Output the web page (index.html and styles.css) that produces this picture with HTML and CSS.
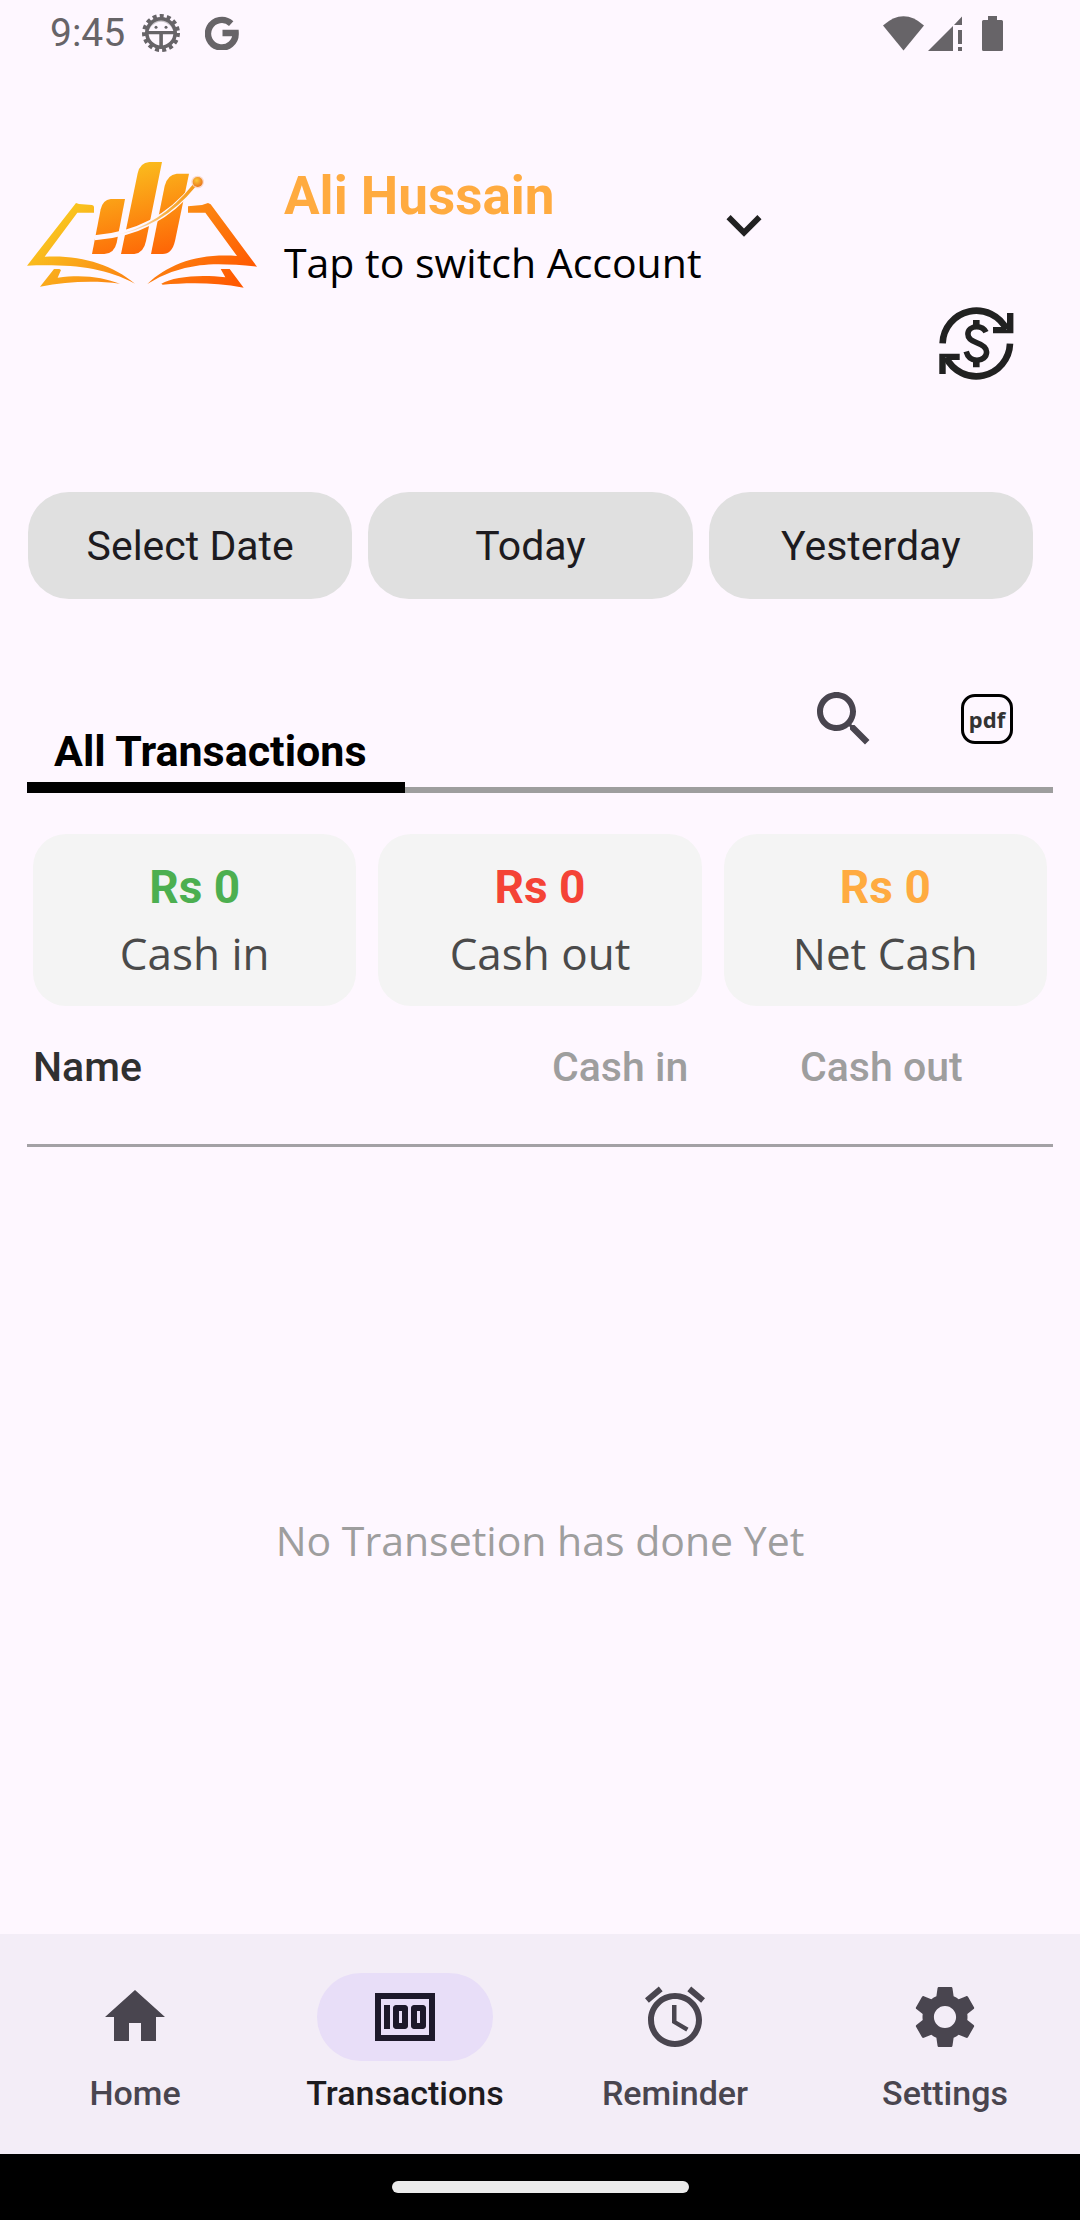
FILE: index.html
```html
<!DOCTYPE html>
<html lang="en">
<head>
<meta charset="utf-8">
<meta name="viewport" content="width=device-width, initial-scale=1">
<title>Transactions</title>
<link rel="stylesheet" href="styles.css">
</head>
<body>
<div class="status-bar">
  <div class="status-left">
    <span>9:45</span>
    <svg class="status-debug" viewBox="0 0 38 38" aria-hidden="true">
      <circle cx="19" cy="19" r="17" fill="none" stroke="currentColor" stroke-width="4" stroke-dasharray="4 3.12"/>
      <circle cx="19" cy="19" r="14.2" fill="none" stroke="currentColor" stroke-width="3.6"/>
      <path d="M5 17h28v3.200H5zM17.300 19h3.600v14h-3.600z" fill="currentColor"/>
      <path d="M6 17.500A13 13 0 0 1 32 17.500L28.500 12Q19 3.500 9.500 12z" fill="currentColor" opacity=".35"/>
      <circle cx="14" cy="13.200" r="1.500" fill="currentColor"/>
      <circle cx="24" cy="13.200" r="1.500" fill="currentColor"/>
    </svg>
    <svg class="status-g" viewBox="0 0 34 34" aria-hidden="true">
      <path d="M26.200 7.600A13.800 13.800 0 1 0 30.600 17H17.500" fill="none" stroke="currentColor" stroke-width="6.400"/>
    </svg>
  </div>
  <div class="status-right">
    <svg class="status-wifi" viewBox="0 0 41 35" aria-hidden="true"><path d="M0 9.500Q20.500-9 41 9.500L20.500 34.500z" fill="currentColor"/></svg>
    <svg class="status-signal" viewBox="0 0 34 35" aria-hidden="true"><path d="M0 35L25 10V35zM26 9L34 0.500V9zM30 14h4v14h-4zM30 31h4v4h-4z" fill="currentColor"/></svg>
    <svg class="status-battery" viewBox="0 0 21 35" aria-hidden="true"><path d="M6 0h9v4h4.500q1.500 0 1.500 1.500v28q0 1.500-1.500 1.500h-18Q0 35 0 33.500v-28Q0 4 1.500 4H6z" fill="currentColor"/></svg>
  </div>
</div>

<header class="header">
  <button class="account" type="button">
    <svg class="logo" viewBox="81 66 690 378" aria-hidden="true">
      <defs>
        <linearGradient id="flame" gradientUnits="userSpaceOnUse" x1="210" y1="180" x2="560" y2="560">
          <stop offset="0" stop-color="#f9c920"/>
          <stop offset=".5" stop-color="#fb8c14"/>
          <stop offset="1" stop-color="#ff5a02"/>
        </linearGradient>
        <linearGradient id="bars" gradientUnits="userSpaceOnUse" x1="390" y1="60" x2="460" y2="345">
          <stop offset="0" stop-color="#fac01f"/>
          <stop offset="1" stop-color="#fe6606"/>
        </linearGradient>
        <linearGradient id="trail" gradientUnits="userSpaceOnUse" x1="340" y1="285" x2="580" y2="140">
          <stop offset="0" stop-color="#fef7ff"/>
          <stop offset=".6" stop-color="#f8b040"/>
          <stop offset="1" stop-color="#f59a1a"/>
        </linearGradient>
        <radialGradient id="ball" cx=".4" cy=".35" r=".7">
          <stop offset="0" stop-color="#fcc838"/>
          <stop offset="1" stop-color="#e8701a"/>
        </radialGradient>
      </defs>
      <g fill="url(#flame)">
        <path d="M228 189L237 192L276 195Q282 196 282 201V218H232L134 350C240 344 335 372 405 431C310 381 215 373 81 377z"/>
        <path d="M564 199L606 195L624 189L632 193L771 380C700 372 640 370 600 376Q510 388 442 432C505 373 590 340 711 348L616 218H564z"/>
        <path d="M162 387H178L183 390L173 413C250 402 310 412 360 431C280 421 200 425 120 440z"/>
        <path d="M662 387H689L731 443C640 426 560 429 488 434L484 431C520 410 600 402 676 412z"/>
      </g>
      <g fill="url(#bars)">
        <path d="M276 342L302 208Q308 180 332 177H375L350 308Q343 340 313 342z"/>
        <path d="M363 342L413 100Q420 68 448 66H486L438 303Q431 339 403 342z"/>
        <path d="M453 342L494 138Q502 104 530 101H567L525 303Q516 342 488 342z"/>
      </g>
      <path d="M284 293Q470 280 584 136" fill="none" stroke="#fef7ff" stroke-width="15"/>
      <path d="M340 286Q480 258 578 134L586 141Q485 264 340 286z" fill="url(#trail)"/>
      <circle cx="593" cy="126" r="19" fill="#f7c6a8" opacity=".6"/>
      <circle cx="593" cy="126" r="15" fill="url(#ball)"/>
    </svg>
    <span class="account-text">
      <span class="account-name">Ali Hussain</span>
      <span class="account-hint">Tap to switch Account</span>
    </span>
    <svg class="chevron" viewBox="0 0 24 24" aria-hidden="true"><path d="M7.410 8.590L12 13.170l4.590-4.580L18 10l-6 6-6-6z" fill="currentColor"/></svg>
  </button>
  <button class="currency" type="button" aria-label="Change currency">
    <svg viewBox="39 26 75 75" aria-hidden="true">
      <g fill="none" stroke="currentColor" stroke-width="6.600">
        <path d="M42.600 63.300A33.700 33.700 0 0 1 106.500 49.500"/>
        <path d="M110 63.700A33.700 33.700 0 0 1 46.100 77.500"/>
        <path d="M86 52.200C84.300 48.500 80.800 46.700 76.700 46.700C71.500 46.700 67.900 49.800 67.900 54C67.900 58.500 71 60.800 77 62.800C83.500 65 86.600 67.500 86.600 72C86.600 77 82 80.200 77 80.200C71.500 80.200 67.700 77 66.200 71.500" stroke-width="5.600"/>
      </g>
      <path d="M107 33h6.400v20.300H93V47h10.500L107 50zM45.700 94h-6.400V73.700h20.400V80H49.200L45.700 77zM73 40h6.600v6H73zM73 81h6.600v6.200H73z" fill="currentColor"/>
    </svg>
  </button>
</header>

<main class="main">
  <div class="date-filters">
    <button class="date-filter" type="button">Select Date</button>
    <button class="date-filter" type="button">Today</button>
    <button class="date-filter" type="button">Yesterday</button>
  </div>

  <div class="tabs">
    <a class="tab" href="#all">All Transactions</a>
    <div class="tab-actions">
      <button class="search" type="button" aria-label="Search">
        <svg viewBox="0 0 24 24" aria-hidden="true"><path d="M15.500 14h-.79l-.28-.27C15.410 12.590 16 11.110 16 9.500 16 5.910 13.090 3 9.500 3S3 5.910 3 9.500 5.910 16 9.500 16c1.610 0 3.090-.59 4.230-1.570l.27.28v.79l5 4.990L20.490 19l-4.990-5zm-6 0C7.010 14 5 11.990 5 9.500S7.010 5 9.500 5 14 7.010 14 9.500 11.990 14 9.500 14z" fill="currentColor"/></svg>
      </button>
      <button class="pdf" type="button">pdf</button>
    </div>
  </div>

  <section class="totals" id="all">
    <div class="total">
      <strong class="amount amount-in">Rs 0</strong>
      <span class="total-label">Cash in</span>
    </div>
    <div class="total">
      <strong class="amount amount-out">Rs 0</strong>
      <span class="total-label">Cash out</span>
    </div>
    <div class="total">
      <strong class="amount amount-net">Rs 0</strong>
      <span class="total-label">Net Cash</span>
    </div>
  </section>

  <table class="ledger">
    <thead>
      <tr>
        <th class="col-name" scope="col">Name</th>
        <th class="col-in" scope="col">Cash in</th>
        <th class="col-out" scope="col">Cash out</th>
      </tr>
    </thead>
  </table>
  <p class="empty">No Transetion has done Yet</p>
</main>

<nav class="nav">
  <a class="nav-item" href="#home">
    <span class="nav-icon"><svg viewBox="0 0 24 24" aria-hidden="true"><path d="M10 20v-6h4v6h5v-8h3L12 3 2 12h3v8z" fill="currentColor"/></svg></span>
    <span>Home</span>
  </a>
  <a class="nav-item active" href="#transactions" aria-current="page">
    <span class="nav-icon"><svg viewBox="0 0 24 24" aria-hidden="true"><path d="M5 8h2v8H5zm7 0H9c-.55 0-1 .45-1 1v6c0 .55.45 1 1 1h3c.55 0 1-.45 1-1V9c0-.55-.45-1-1-1zm-1 6h-1v-4h1v4zm7-6h-3c-.55 0-1 .45-1 1v6c0 .55.45 1 1 1h3c.55 0 1-.45 1-1V9c0-.55-.45-1-1-1zm-1 6h-1v-4h1v4zM2 4v16h20V4H2zm2 14V6h16v12H4z" fill="currentColor"/></svg></span>
    <span>Transactions</span>
  </a>
  <a class="nav-item" href="#reminder">
    <span class="nav-icon"><svg viewBox="0 0 24 24" aria-hidden="true"><path d="M22 5.720l-4.600-3.860-1.290 1.530 4.600 3.860L22 5.720zM7.880 3.390L6.600 1.860 2 5.710l1.290 1.530 4.590-3.850zM12.500 8H11v6l4.750 2.850.75-1.230-4-2.370V8zM12 4c-4.970 0-9 4.030-9 9s4.020 9 9 9c4.970 0 9-4.030 9-9s-4.030-9-9-9zm0 16c-3.870 0-7-3.130-7-7s3.130-7 7-7 7 3.130 7 7-3.130 7-7 7z" fill="currentColor"/></svg></span>
    <span>Reminder</span>
  </a>
  <a class="nav-item" href="#settings">
    <span class="nav-icon"><svg viewBox="0 0 24 24" aria-hidden="true"><path d="M19.430 12.980c.04-.32.07-.64.07-.98s-.03-.66-.07-.98l2.110-1.650c.19-.15.24-.42.12-.64l-2-3.460c-.12-.22-.39-.3-.61-.22l-2.490 1c-.52-.4-1.080-.73-1.690-.98l-.38-2.650C14.460 2.180 14.250 2 14 2h-4c-.25 0-.46.18-.49.42l-.38 2.650c-.61.25-1.170.59-1.690.98l-2.490-1c-.23-.09-.49 0-.61.22l-2 3.460c-.13.22-.07.49.12.64l2.110 1.650c-.04.32-.07.65-.07.98s.03.66.07.98l-2.110 1.650c-.19.15-.24.42-.12.64l2 3.460c.12.22.39.3.61.22l2.490-1c.52.4 1.080.73 1.690.98l.38 2.650c.03.24.24.42.49.42h4c.25 0 .46-.18.49-.42l.38-2.650c.61-.25 1.170-.59 1.690-.98l2.490 1c.23.09.49 0 .61-.22l2-3.460c.12-.22.07-.49-.12-.64l-2.110-1.650zM12 15.700c-2.040 0-3.700-1.660-3.700-3.700s1.660-3.700 3.700-3.700 3.700 1.660 3.700 3.700-1.660 3.700-3.700 3.700z" fill="currentColor"/></svg></span>
    <span>Settings</span>
  </a>
</nav>
<div class="system-bar"><span class="gesture-handle"></span></div>
</body>
</html>
```

FILE: styles.css
```css
* {
  box-sizing: border-box;
}

body {
  display: flex;
  flex-direction: column;
  min-height: 100vh;
  margin: 0;
  background: #fef7ff;
  color: #1d1b20;
  font-family: Roboto, "Liberation Sans", sans-serif;
  font-size: 41px;
}

button {
  padding: 0;
  border: 0;
  background: none;
  color: inherit;
  font: inherit;
}

a {
  color: inherit;
  text-decoration: none;
}

svg {
  display: block;
  flex: none;
}

/* Device status bar */
.status-bar {
  display: flex;
  align-items: center;
  justify-content: space-between;
  height: 66px;
  padding: 0 77px 0 50px;
  color: #676468;
  font-size: 39px;
}

.status-left,
.status-right {
  display: flex;
  align-items: center;
}

.status-debug {
  width: 38px;
  margin: 0 25px 0 17px;
}

.status-g {
  width: 34px;
}

.status-wifi {
  width: 41px;
  margin-right: 4px;
}

.status-signal {
  width: 34px;
  margin-right: 20px;
}

.status-battery {
  width: 21px;
}

/* Account header */
.header {
  display: flex;
  flex-direction: column;
  padding: 89px 27px 0;
}

.account {
  display: flex;
  align-items: center;
  align-self: flex-start;
  text-align: left;
}

.logo {
  width: 230px;
  margin-right: 27px;
}

.account-text {
  display: flex;
  flex-direction: column;
  min-width: 425px;
  padding-top: 8px;
  line-height: 66px;
}

.account-name {
  color: #ffab40;
  font-size: 53px;
  font-weight: 700;
}

.account-hint {
  color: #000;
  font-family: "Open Sans", "Noto Sans", sans-serif;
  font-size: 41px;
}

.chevron {
  width: 70px;
  color: #212121;
}

.currency {
  align-self: flex-end;
  width: 75px;
  margin: 11px 39px 0 0;
  color: #212121;
}

/* Content */
.main {
  display: flex;
  flex: 1;
  flex-direction: column;
  padding: 111px 27px 0;
}

.date-filters {
  display: grid;
  grid-template-columns: repeat(3, 1fr);
  gap: 16px;
  padding: 0 20px 0 1px;
}

.date-filter {
  height: 107px;
  border-radius: 41px;
  background: #e0e0e0;
}

.tabs {
  display: flex;
  align-items: flex-end;
  justify-content: space-between;
  height: 110px;
  margin-top: 84px;
  border-bottom: 6px solid #9e9e9e;
}

.tab {
  min-width: 378px;
  margin-bottom: -6px;
  padding: 0 27px;
  border-bottom: 11px solid #000;
  color: #000;
  font-size: 43px;
  font-weight: 700;
  line-height: 62px;
}

.tab-actions {
  display: flex;
  align-items: center;
  align-self: flex-start;
  gap: 81px;
  padding-right: 40px;
}

.search {
  width: 72px;
  color: #49454f;
}

.pdf {
  width: 52px;
  height: 50px;
  border: 3px solid #000;
  border-radius: 14px;
  color: #333;
  font-family: "Noto Sans", "Open Sans", sans-serif;
  font-size: 22px;
  font-weight: 700;
  line-height: 42px;
}

.totals {
  display: grid;
  grid-template-columns: repeat(3, 1fr);
  gap: 22px;
  padding: 41px 6px 0;
}

.total {
  display: flex;
  flex-direction: column;
  align-items: center;
  padding: 20px 0;
  border-radius: 33px;
  background: #f4f4f4;
  line-height: 66px;
}

.amount {
  font-size: 46px;
}

.amount-in {
  color: #4caf50;
}

.amount-out {
  color: #f44336;
}

.amount-net {
  color: #ffab40;
}

.total-label {
  color: #4a4a4a;
  font-family: "Open Sans", "Noto Sans", sans-serif;
  font-size: 44px;
}

.ledger {
  width: 100%;
  border-collapse: collapse;
  table-layout: fixed;
}

.ledger th {
  height: 139px;
  padding: 0 0 16px;
  border-bottom: 3px solid #a3a1a5;
  color: #9e9e9e;
  font-weight: 500;
  text-align: left;
}

.ledger .col-name {
  padding-left: 6px;
  color: #303030;
}

.col-in {
  width: 248px;
}

.col-out {
  width: 253px;
}

.empty {
  display: flex;
  flex: 1;
  align-items: center;
  justify-content: center;
  margin: 0;
  color: #9e9e9e;
  font-family: "Open Sans", "Noto Sans", sans-serif;
  font-size: 41px;
}

/* Bottom navigation */
.nav {
  display: grid;
  grid-template-columns: repeat(4, 1fr);
  height: 220px;
  padding-top: 39px;
  background: #f3edf7;
}

.nav-item {
  display: flex;
  flex-direction: column;
  align-items: center;
  gap: 10px;
  color: #49454f;
  font-size: 34px;
  font-weight: 500;
  line-height: 44px;
}

.nav-icon {
  display: grid;
  place-items: center;
  width: 176px;
  height: 88px;
  border-radius: 44px;
}

.nav-icon svg {
  width: 72px;
}

.nav-item.active {
  color: #1d1b20;
}

.active .nav-icon {
  background: #e8def8;
  color: #1d192b;
}

.system-bar {
  display: grid;
  place-items: center;
  height: 66px;
  background: #000;
}

.gesture-handle {
  width: 297px;
  height: 12px;
  border-radius: 6px;
  background: #ebebeb;
}
```
